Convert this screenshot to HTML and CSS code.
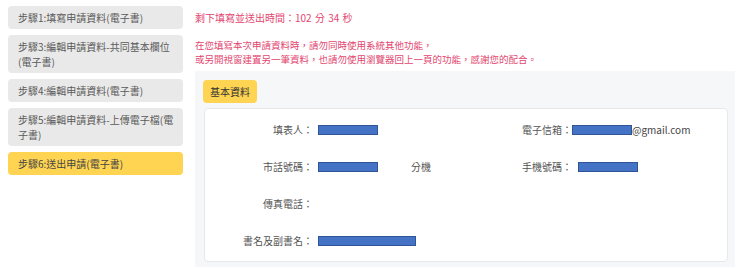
FILE: index.html
```html
<!DOCTYPE html>
<html lang="zh-Hant">
<head>
    <meta charset="UTF-8">
    <meta name="viewport" content="width=device-width, initial-scale=1.0">
    <title>送出申請</title>
    <link rel="stylesheet" href="styles.css">
</head>
<body>
<div class="page">
    <div class="steps">
        <div class="step">步驟1:填寫申請資料(電子書)</div>
        <div class="step">步驟3:編輯申請資料-共同基本欄位(電子書)</div>
        <div class="step">步驟4:編輯申請資料(電子書)</div>
        <div class="step">步驟5:編輯申請資料-上傳電子檔(電子書)</div>
        <div class="step active">步驟6:送出申請(電子書)</div>
    </div>

    <div class="main">
        <div class="countdown">剩下填寫並送出時間：102 分 34 秒</div>
        <div class="notice">
            在您填寫本次申請資料時，請勿同時使用系統其他功能，<br>
            或另開視窗建置另一筆資料，也請勿使用瀏覽器回上一頁的功能，感謝您的配合。
        </div>

        <div class="panel">
            <div class="tab">基本資料</div>
            <div class="card">
                <div class="label">填表人：</div>
                <div class="value"><span class="mask"></span></div>
                <div class="label">電子信箱：</div>
                <div class="value"><span class="mask"></span>@gmail.com</div>

                <div class="label">市話號碼：</div>
                <div class="value"><span class="mask"></span><span class="ext">分機</span></div>
                <div class="label">手機號碼：</div>
                <div class="value"><span class="mask shifted"></span></div>

                <div class="label">傳真電話：</div>
                <div class="value"></div>
                <div class="label"></div>
                <div class="value"></div>

                <div class="label">書名及副書名：</div>
                <div class="value wide-row"><span class="mask long"></span></div>
            </div>
        </div>
    </div>
</div>
</body>
</html>
```

FILE: styles.css
```css
body {
    margin: 0;
    font-family: "Noto Sans CJK TC", "Noto Sans", sans-serif;
    font-size: 10px; color: #555; background: #fff;
}
.page {
    display: flex; gap: 12px;
    padding: 6px 5px 0 8px;
}
.steps {
    width: 175px; flex-shrink: 0;
    display: flex; flex-direction: column; gap: 6px;
}
.step {
    background: #e9e9e9; border-radius: 4px;
    padding: 4px 6px 4px 10px; line-height: 15px; color: #5a5a5a;
}
.step.active { background: #fed452; color: #444; }

.main { flex: 1; display: flex; flex-direction: column; }
.countdown {
    color: #e2466f; line-height: 15px; margin-top: 4px;
    word-spacing: 1px;
}
.notice {
    color: #e2466f; line-height: 14px; margin-top: 13px;
    font-size: 9.5px;
}
.panel {
    background: #f6f7f9; margin-top: 5px;
    padding: 9px 7px 5px 8px;
}
.tab {
    display: inline-block; background: #fed452; color: #333;
    border-radius: 4px; padding: 4px 7px; line-height: 15px;
}
.card {
    margin-top: 5px; margin-left: 1px;
    background: #fff; border: 1px solid #e6e8eb; border-radius: 4px;
    display: grid; grid-template-columns: 108px 151px 108px 1fr;
    grid-auto-rows: 37px; align-items: center;
    padding: 2px 0 2px;
}
.label { text-align: right; color: #555; }
.value { padding-left: 5px; color: #444; display: flex; align-items: center; }
.card .label:nth-child(4n+3) + .value { padding-left: 0; }
.wide-row { grid-column: 2 / 5; }
.mask {
    display: inline-block; width: 58px; height: 8px;
    background: #4472c4; border: 1px solid #2f5597;
}
.mask.long { width: 96px; }
.mask.shifted { margin-left: 6px; }
.ext { margin-left: 33px; color: #555; }
```
